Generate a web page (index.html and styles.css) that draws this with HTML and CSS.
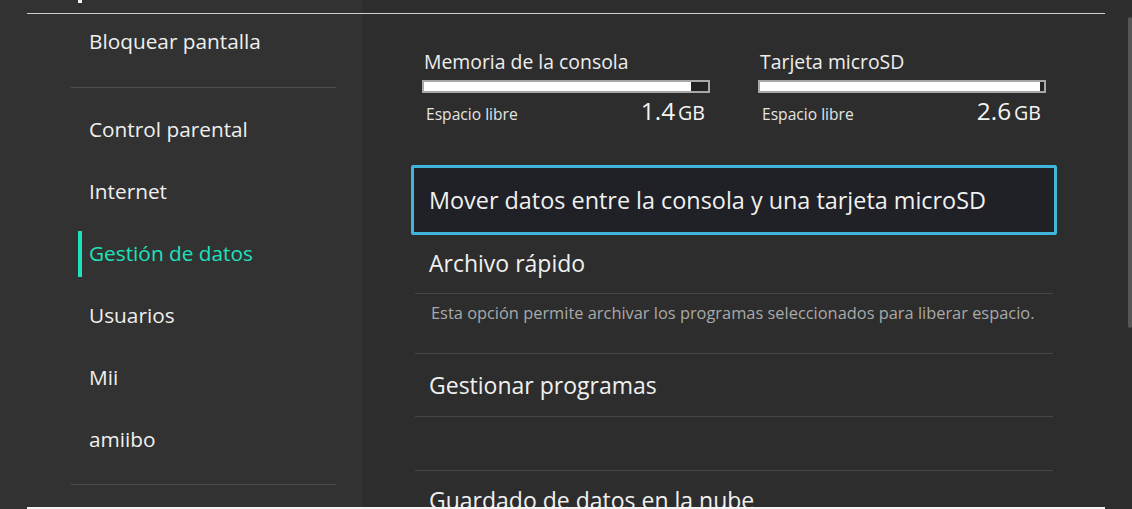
FILE: index.html
```html
<!DOCTYPE html>
<html lang="es">
<head>
    <meta charset="UTF-8">
    <meta name="viewport" content="width=device-width, initial-scale=1.0">
    <title>Configuración de la consola</title>
    <link rel="stylesheet" href="styles.css">
</head>
<body>

<div id="screen">
    <div class="header">
        <span class="header-mark"></span>
    </div>

    <div class="main">
        <div class="sidebar">
            <div class="side-item side-first">Bloquear pantalla</div>
            <div class="side-sep sep-top"></div>
            <div class="side-item">Control parental</div>
            <div class="side-item">Internet</div>
            <div class="side-item active">Gestión de datos</div>
            <div class="side-item">Usuarios</div>
            <div class="side-item">Mii</div>
            <div class="side-item">amiibo</div>
            <div class="side-sep sep-bottom"></div>
        </div>

        <div class="content">
            <div class="storage">
                <div class="storage-box">
                    <div class="storage-title">Memoria de la consola</div>
                    <div class="bar"><div class="bar-fill" style="width: 94%"></div></div>
                    <div class="storage-info">
                        <span class="free-label">Espacio libre</span>
                        <span class="free-value">1.4<span class="unit">GB</span></span>
                    </div>
                </div>
                <div class="storage-box">
                    <div class="storage-title">Tarjeta microSD</div>
                    <div class="bar"><div class="bar-fill" style="width: 98.5%"></div></div>
                    <div class="storage-info">
                        <span class="free-label">Espacio libre</span>
                        <span class="free-value">2.6<span class="unit">GB</span></span>
                    </div>
                </div>
            </div>

            <div class="options">
                <div class="option selected">Mover datos entre la consola y una tarjeta microSD</div>
                <div class="option row-archive">Archivo rápido</div>
                <div class="option-desc">Esta opción permite archivar los programas seleccionados para liberar espacio.</div>
                <div class="option row-manage">Gestionar programas</div>
                <div class="option row-empty"></div>
                <div class="option row-cloud">Guardado de datos en la nube</div>
            </div>
        </div>

        <div class="scrollbar"><div class="scroll-thumb"></div></div>
    </div>

    <div class="footer-line"></div>
</div>

</body>
</html>
```

FILE: styles.css
```css
html, body {
    margin: 0;
    padding: 0;
}

body {
    font-family: 'Open Sans', 'Noto Sans', sans-serif;
    background-color: #2d2d2d;
    color: #ececec;
    width: 1132px;
    height: 509px;
    overflow: hidden;
}

#screen {
    position: relative;
    width: 1132px;
    height: 509px;
    overflow: hidden;
    background: linear-gradient(to right, #323232 0, #323232 362px, #2d2d2d 362px);
}

.header {
    height: 13px;
    margin: 0 27px;
    border-bottom: 1px solid #cfcfcf;
}

.header-mark {
    display: block;
    width: 4px;
    height: 3px;
    margin-left: 51px;
    background-color: #f2f2f2;
}

.main {
    display: flex;
    height: 494px;
}

/* left menu */
.sidebar {
    width: 362px;
    flex-shrink: 0;
}

.side-item {
    position: relative;
    height: 62px;
    line-height: 61px;
    padding-left: 89px;
    font-size: 20.8px;
    color: #efefef;
}

.side-first {
    height: 56px;
    line-height: 54px;
}

.side-item.active {
    color: #1de2bc;
}

.side-item.active::before {
    content: "";
    position: absolute;
    left: 78px;
    top: 8px;
    width: 4px;
    height: 46px;
    background-color: #1de2bc;
}

.side-sep {
    height: 1px;
    margin-left: 71px;
    width: 265px;
    background-color: #4e4e4e;
}

.sep-top {
    margin-top: 17px;
    margin-bottom: 11px;
}

.sep-bottom {
    margin-top: 13px;
}

/* right panel */
.content {
    width: 700px;
    padding-left: 49px;
}

.storage {
    display: flex;
    gap: 48px;
    padding-left: 11px;
    padding-top: 35px;
    height: 151px;
    box-sizing: border-box;
}

.storage-box {
    width: 288px;
}

.storage-title {
    font-size: 19.4px;
    line-height: 26px;
    padding-left: 2px;
    color: #eeeeee;
}

.bar {
    margin-top: 5px;
    height: 9px;
    border: 2px solid #a8a8a8;
    background-color: #222;
}

.bar-fill {
    height: 100%;
    background-color: #ffffff;
}

.storage-info {
    display: flex;
    justify-content: space-between;
    align-items: baseline;
    padding: 1px 5px 0 4px;
}

.free-label {
    font-size: 15.6px;
    color: #e4e4e4;
}

.free-value {
    font-size: 24.4px;
    color: #f4f4f4;
}

.unit {
    font-size: 19.6px;
    margin-left: 3px;
}

.options {
    width: 646px;
}

.option {
    margin: 0 4px;
    padding-left: 14px;
    font-size: 23px;
    color: #f0f0f0;
    border-bottom: 1px solid #464646;
}

.option.selected {
    margin: 0;
    height: 64px;
    line-height: 64px;
    padding-left: 15px;
    font-size: 23.4px;
    border: 3px solid #3fb6da;
    background-color: #1f2126;
    border-radius: 2px;
}

.row-archive {
    height: 58px;
    line-height: 56px;
}

.option-desc {
    margin: 0 4px;
    height: 60px;
    padding-left: 16px;
    padding-top: 7px;
    box-sizing: border-box;
    font-size: 16.4px;
    color: #a9a9a9;
    border-bottom: 1px solid #464646;
}

.row-manage {
    height: 62px;
    line-height: 63px;
}

.row-empty {
    height: 53px;
}

.row-cloud {
    height: 62px;
    line-height: 59px;
    border-bottom: none;
}

.scrollbar {
    margin-left: 58px;
    padding-top: 3px;
}

.scroll-thumb {
    width: 4px;
    height: 311px;
    border-radius: 2px;
    background-color: #555555;
}

.footer-line {
    position: absolute;
    left: 27px;
    right: 27px;
    bottom: 0;
    height: 2px;
    background-color: #f4f4f4;
}
```
